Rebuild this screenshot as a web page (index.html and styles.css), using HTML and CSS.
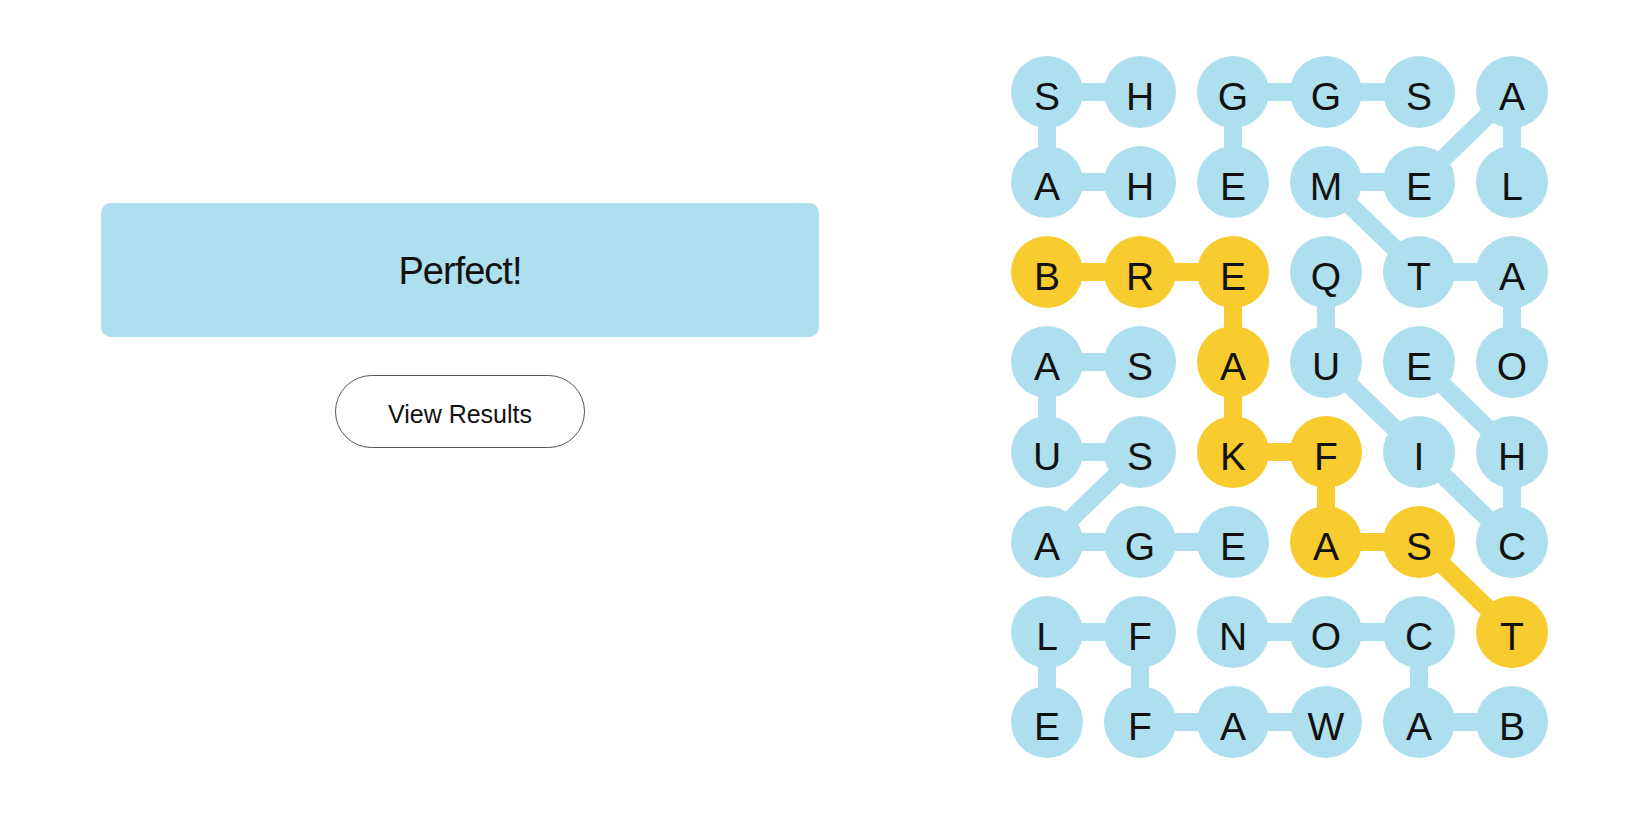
FILE: index.html
```html
<!DOCTYPE html>
<html lang="en">
<head>
<meta charset="utf-8">
<title>Strands</title>
<link rel="stylesheet" href="styles.css">
</head>
<body>
<main class="page">
  <section class="result">
    <div class="banner">Perfect!</div>
    <button class="results-btn" type="button">View Results</button>
  </section>
  <section class="board">
    <svg class="links" width="537" height="702" viewBox="0 0 537 702" aria-hidden="true">
      <g class="blue">
        <!-- HASH -->
        <line x1="36" y1="36" x2="129" y2="36"/>
        <line x1="36" y1="36" x2="36" y2="126"/>
        <line x1="36" y1="126" x2="129" y2="126"/>
        <!-- EGGS -->
        <line x1="222" y1="36" x2="315" y2="36"/>
        <line x1="315" y1="36" x2="408" y2="36"/>
        <line x1="222" y1="36" x2="222" y2="126"/>
        <!-- OATMEAL -->
        <line x1="501" y1="306" x2="501" y2="216"/>
        <line x1="501" y1="216" x2="408" y2="216"/>
        <line x1="408" y1="216" x2="315" y2="126"/>
        <line x1="315" y1="126" x2="408" y2="126"/>
        <line x1="408" y1="126" x2="501" y2="36"/>
        <line x1="501" y1="36" x2="501" y2="126"/>
        <!-- QUICHE -->
        <line x1="315" y1="216" x2="315" y2="306"/>
        <line x1="315" y1="306" x2="408" y2="396"/>
        <line x1="408" y1="396" x2="501" y2="486"/>
        <line x1="501" y1="486" x2="501" y2="396"/>
        <line x1="501" y1="396" x2="408" y2="306"/>
        <!-- SAUSAGE -->
        <line x1="129" y1="306" x2="36" y2="306"/>
        <line x1="36" y1="306" x2="36" y2="396"/>
        <line x1="36" y1="396" x2="129" y2="396"/>
        <line x1="129" y1="396" x2="36" y2="486"/>
        <line x1="36" y1="486" x2="129" y2="486"/>
        <line x1="129" y1="486" x2="222" y2="486"/>
        <!-- WAFFLE -->
        <line x1="315" y1="666" x2="222" y2="666"/>
        <line x1="222" y1="666" x2="129" y2="666"/>
        <line x1="129" y1="666" x2="129" y2="576"/>
        <line x1="129" y1="576" x2="36" y2="576"/>
        <line x1="36" y1="576" x2="36" y2="666"/>
        <!-- BACON -->
        <line x1="501" y1="666" x2="408" y2="666"/>
        <line x1="408" y1="666" x2="408" y2="576"/>
        <line x1="408" y1="576" x2="315" y2="576"/>
        <line x1="315" y1="576" x2="222" y2="576"/>
      </g>
      <g class="gold">
        <!-- BREAKFAST -->
        <line x1="36" y1="216" x2="129" y2="216"/>
        <line x1="129" y1="216" x2="222" y2="216"/>
        <line x1="222" y1="216" x2="222" y2="306"/>
        <line x1="222" y1="306" x2="222" y2="396"/>
        <line x1="222" y1="396" x2="315" y2="396"/>
        <line x1="315" y1="396" x2="315" y2="486"/>
        <line x1="315" y1="486" x2="408" y2="486"/>
        <line x1="408" y1="486" x2="501" y2="576"/>
      </g>
    </svg>
    <div class="grid">
      <span class="cell">S</span><span class="cell">H</span><span class="cell">G</span><span class="cell">G</span><span class="cell">S</span><span class="cell">A</span>
      <span class="cell">A</span><span class="cell">H</span><span class="cell">E</span><span class="cell">M</span><span class="cell">E</span><span class="cell">L</span>
      <span class="cell gold">B</span><span class="cell gold">R</span><span class="cell gold">E</span><span class="cell">Q</span><span class="cell">T</span><span class="cell">A</span>
      <span class="cell">A</span><span class="cell">S</span><span class="cell gold">A</span><span class="cell">U</span><span class="cell">E</span><span class="cell">O</span>
      <span class="cell">U</span><span class="cell">S</span><span class="cell gold">K</span><span class="cell gold">F</span><span class="cell">I</span><span class="cell">H</span>
      <span class="cell">A</span><span class="cell">G</span><span class="cell">E</span><span class="cell gold">A</span><span class="cell gold">S</span><span class="cell">C</span>
      <span class="cell">L</span><span class="cell">F</span><span class="cell">N</span><span class="cell">O</span><span class="cell">C</span><span class="cell gold">T</span>
      <span class="cell">E</span><span class="cell">F</span><span class="cell">A</span><span class="cell">W</span><span class="cell">A</span><span class="cell">B</span>
    </div>
  </section>
</main>
</body>
</html>
```

FILE: styles.css
```css
html, body {
  margin: 0;
  padding: 0;
  background: #ffffff;
}

body {
  font-family: "Liberation Sans", Arial, sans-serif;
  color: #121212;
  width: 1650px;
  height: 825px;
  overflow: hidden;
}

.page {
  display: flex;
  align-items: flex-start;
  padding-top: 56px;
}

.result {
  width: 718px;
  margin-left: 101px;
  margin-top: 147px;
  display: flex;
  flex-direction: column;
  align-items: center;
  gap: 38px;
}

.banner {
  box-sizing: border-box;
  width: 100%;
  height: 134px;
  padding-top: 2px;
  background: #aedfee;
  border-radius: 10px;
  display: flex;
  align-items: center;
  justify-content: center;
  font-size: 38px;
  color: #121212;
  letter-spacing: -1px;
}

.results-btn {
  box-sizing: border-box;
  width: 250px;
  height: 73px;
  border: 1px solid #555555;
  border-radius: 37px;
  background: #ffffff;
  font-family: "Liberation Sans", Arial, sans-serif;
  font-size: 25px;
  color: #121212;
  padding: 5px 0 0;
}

.board {
  position: relative;
  margin-left: 192px;
  width: 537px;
  height: 702px;
}

.links {
  position: absolute;
  left: 0;
  top: 0;
}

.links line {
  stroke-width: 18;
}

.links .blue line {
  stroke: #aedfee;
}

.links .gold line {
  stroke: #f8cb2e;
}

.grid {
  position: relative;
  display: grid;
  grid-template-columns: repeat(6, 72px);
  grid-auto-rows: 72px;
  column-gap: 21px;
  row-gap: 18px;
}

.cell {
  box-sizing: border-box;
  width: 72px;
  height: 72px;
  padding-top: 8px;
  border-radius: 50%;
  background: #aedfee;
  display: flex;
  align-items: center;
  justify-content: center;
  font-size: 39px;
  color: #121212;
  line-height: 1;
}

.cell.gold {
  background: #f8cb2e;
}
```
